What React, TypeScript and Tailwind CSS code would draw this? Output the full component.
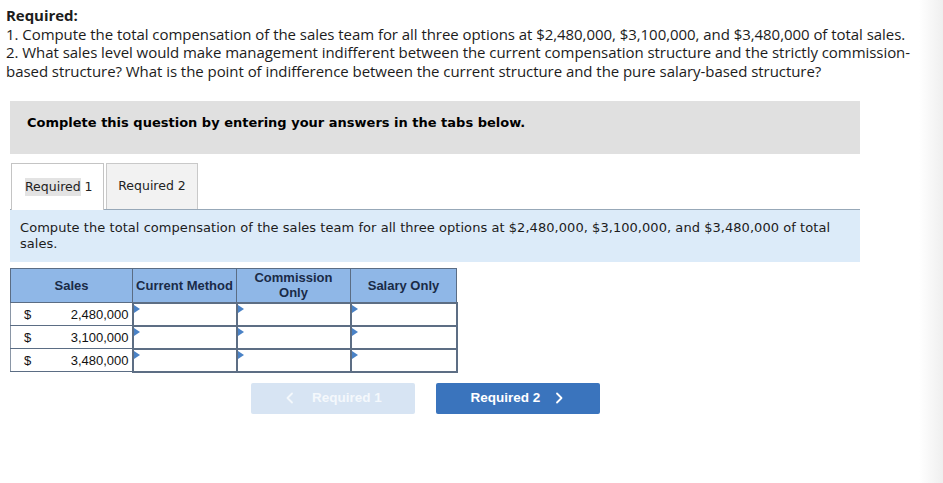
import React from "react";

const Tri = () => (
  <div className="absolute left-0 top-0 w-0 h-0 border-y-[4px] border-y-transparent border-l-[6px] border-l-[#4a82c6]" />
);

const InputCell = () => (
  <td className="p-0 border-2 border-[#5d6e84] bg-white">
    <div className="relative h-[19px]">
      <Tri />
    </div>
  </td>
);

const Chevron = ({ dir }: { dir: "l" | "r" }) => (
  <svg width="8" height="12" viewBox="0 0 8 12" fill="none" stroke="currentColor" strokeWidth="1.8" strokeLinecap="round" strokeLinejoin="round">
    {dir === "r" ? <polyline points="2,1.5 6.5,6 2,10.5" /> : <polyline points="6,1.5 1.5,6 6,10.5" />}
  </svg>
);

const rows = ["2,480,000", "3,100,000", "3,480,000"];

export default function App() {
  return (
    <div className="relative w-[943px] h-[483px] overflow-hidden bg-white font-['Liberation_Sans',Arial,sans-serif] text-[#1c1c1c]">
      <div className="pl-[6px] pt-[6px] text-[15px] leading-[18.5px] font-['Open_Sans',sans-serif] tracking-[-0.05px]">
        <div className="font-bold">Required:</div>
        <div className="whitespace-nowrap">
          1. Compute the total compensation of the sales team for all three options at $2,480,000, $3,100,000, and $3,480,000 of total sales.
        </div>
        <div className="whitespace-nowrap">
          2. What sales level would make management indifferent between the current compensation structure and the strictly commission-
        </div>
        <div className="whitespace-nowrap">
          based structure? What is the point of indifference between the current structure and the pure salary-based structure?
        </div>
      </div>

      <div className="ml-[10px] mt-[21px] w-[850px] h-[53px] bg-[#e0e0e0] pt-[14px] pl-[17px] font-['DejaVu_Sans',Verdana,sans-serif] font-bold text-[13px] leading-[16px] text-black">
        Complete this question by entering your answers in the tabs below.
      </div>

      <div className="ml-[10px] mt-[8px] w-[850px] flex items-end h-[47px] font-['DejaVu_Sans',Verdana,sans-serif] text-[12.5px] text-[#222]">
        <div className="ml-[1px] w-[93px] h-[47px] bg-white border border-b-0 border-[#c4c4c4] flex items-center pl-[13px] relative z-10 -mb-px">
          <span className="bg-[#e3e3e3]">Required</span>&nbsp;1
        </div>
        <div className="ml-[2px] w-[92px] h-[46px] bg-[#f2f2f2] border border-b-0 border-[#c9c9c9] flex items-center justify-center">
          Required 2
        </div>
      </div>

      <div className="ml-[10px] w-[850px] h-[53px] bg-[#dcebf9] border-t border-[#97a8b8] pl-[10px] pt-[10px] font-['DejaVu_Sans',Verdana,sans-serif] text-[13px] tracking-[0.05px] leading-[15.5px] text-[#1c1c1c]">
        <div className="whitespace-nowrap">
          Compute the total compensation of the sales team for all three options at $2,480,000, $3,100,000, and $3,480,000 of total
        </div>
        <div>sales.</div>
      </div>

      <table className="ml-[10px] mt-[6px] border-collapse text-[13px] text-[#111]">
        <thead>
          <tr className="bg-[#8fb7e7] text-[#1a2b47] font-bold h-[34px] leading-[15px]">
            <th className="w-[122px] border border-[#5b6d84] font-bold text-center">Sales</th>
            <th className="w-[104px] border border-[#5b6d84] font-bold text-center">Current Method</th>
            <th className="w-[114px] border border-[#5b6d84] font-bold text-center">
              Commission
              <br />
              Only
            </th>
            <th className="w-[106px] border border-[#5b6d84] font-bold text-center">Salary Only</th>
          </tr>
        </thead>
        <tbody>
          {rows.map((r) => (
            <tr key={r} className="h-[23px]">
              <td className="p-0 border border-[#5b6d84] border-l-[#8a96a6] bg-white">
                <div className="flex justify-between pl-[13px] pr-[3px] leading-[21px]">
                  <span>$</span>
                  <span>{r}</span>
                </div>
              </td>
              <InputCell />
              <InputCell />
              <InputCell />
            </tr>
          ))}
        </tbody>
      </table>

      <div className="flex ml-[251px] mt-[10px] gap-[21px] text-[13.5px] font-bold text-white">
        <div className="w-[164px] h-[31px] rounded-[2px] bg-[#d7e4f3] flex items-center justify-center gap-[18px] pl-[2px] text-[#f4f8fc]">
          <Chevron dir="l" />
          <span>Required 1</span>
        </div>
        <div className="w-[164px] h-[31px] rounded-[2px] bg-[#3a74bd] flex items-center justify-center gap-[15px] pr-[2px]">
          <span>Required 2</span>
          <Chevron dir="r" />
        </div>
      </div>

      <div className="pointer-events-none absolute top-0 right-0 h-full w-[24px] bg-gradient-to-r from-white/0 to-[#efefef]" />
    </div>
  );
}
